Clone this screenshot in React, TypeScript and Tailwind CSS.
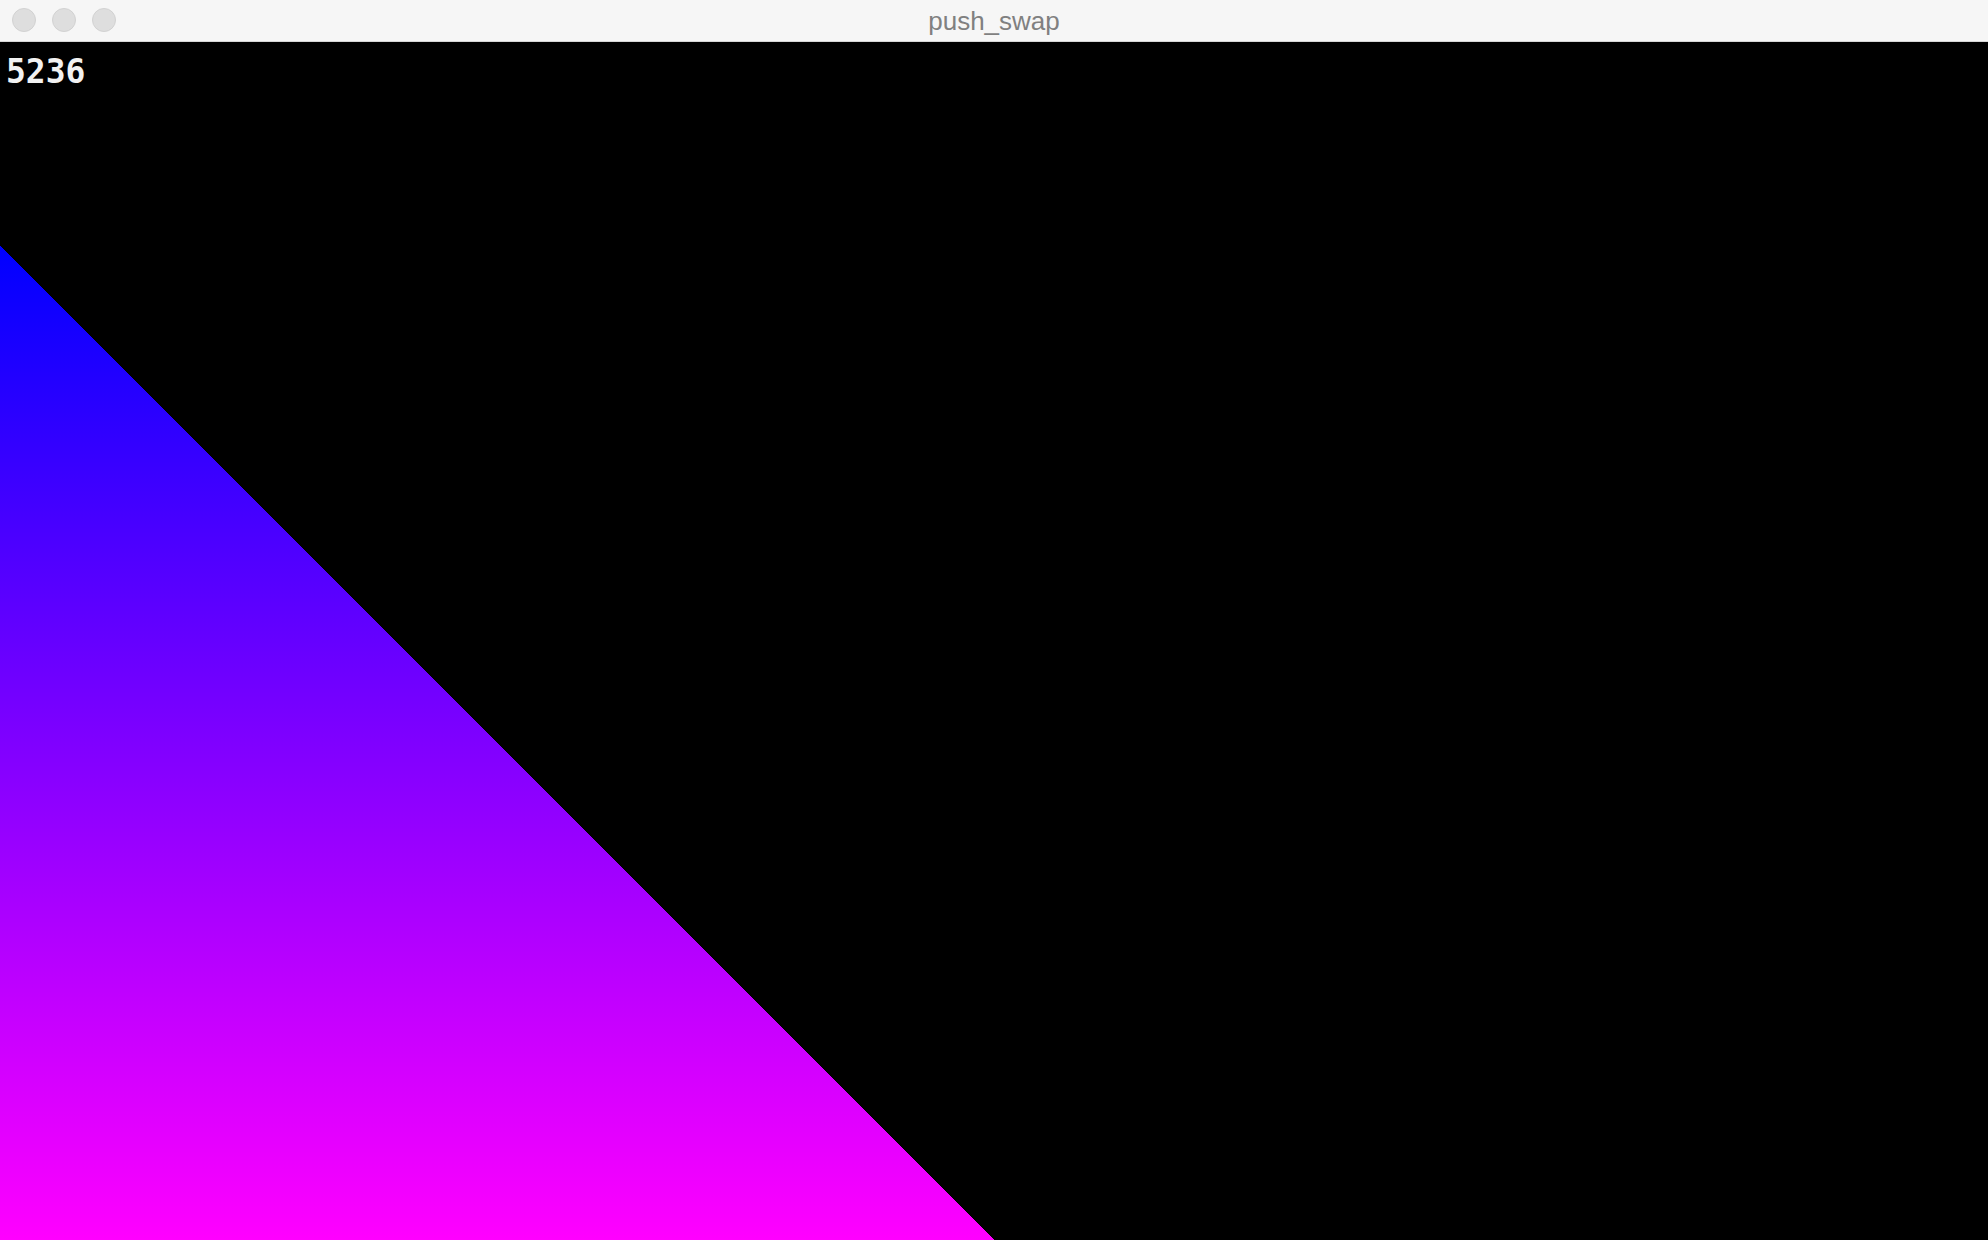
export default function App() {
  return (
    <div className="flex h-[1240px] w-[1988px] flex-col overflow-hidden bg-black">
      <div className="relative flex h-[42px] shrink-0 items-center justify-center border-b border-[#d6d6d6] bg-[#f6f6f6]">
        <div className="absolute left-[12px] top-[8px] flex gap-[16px]">
          <span className="h-[24px] w-[24px] rounded-full border border-[#d2d2d2] bg-[#dedede]" />
          <span className="h-[24px] w-[24px] rounded-full border border-[#d2d2d2] bg-[#dedede]" />
          <span className="h-[24px] w-[24px] rounded-full border border-[#d2d2d2] bg-[#dedede]" />
        </div>
        <span className="font-['Liberation_Sans',sans-serif] text-[26px] leading-none text-[#808080]">push_swap</span>
      </div>
      <div className="relative flex-1">
        <div className="absolute left-[6px] top-[13px] font-['DejaVu_Sans_Mono',monospace] text-[33px] font-bold leading-none text-[#f2f2f2]">
          5236
        </div>
        <svg className="absolute bottom-0 left-0" width="994" height="994" viewBox="0 0 994 994" shapeRendering="crispEdges">
          <defs>
            <linearGradient id="g" x1="0" y1="0" x2="0" y2="1">
              <stop offset="0" stopColor="#0000ff" />
              <stop offset="1" stopColor="#ff00ff" />
            </linearGradient>
          </defs>
          <polygon points="0,0 994,994 0,994" fill="url(#g)" />
        </svg>
      </div>
    </div>
  )
}
